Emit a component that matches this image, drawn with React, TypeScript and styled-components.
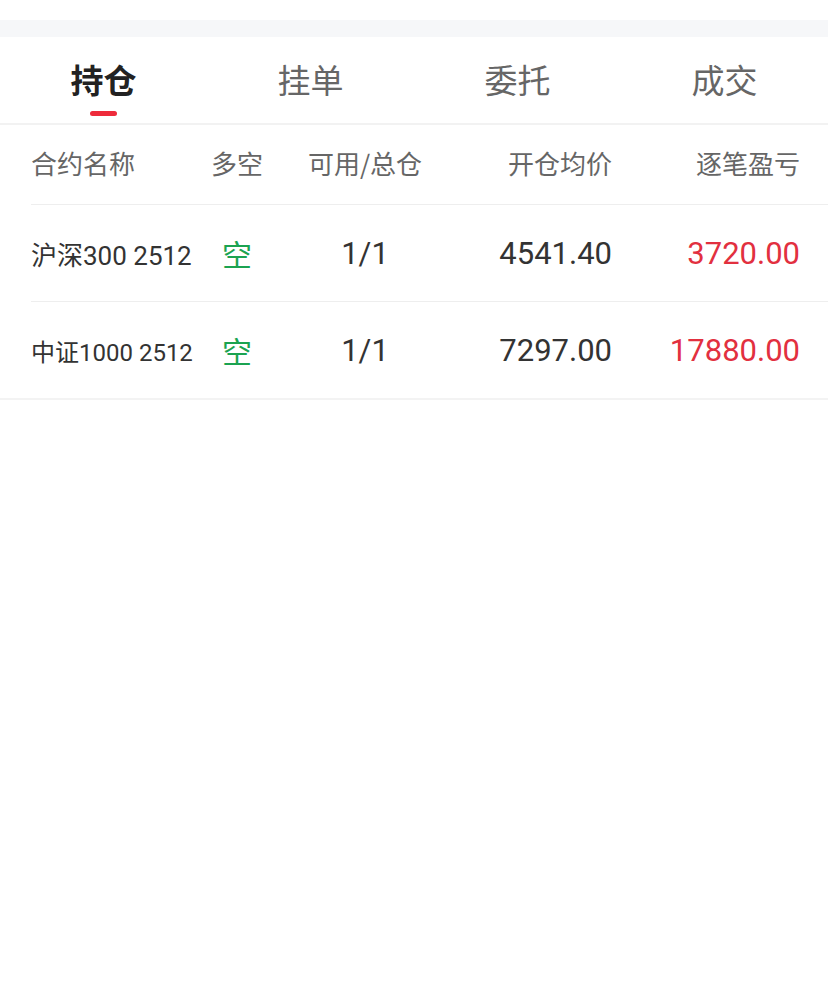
import * as React from 'react';
import styled, { createGlobalStyle } from 'styled-components';

type Position = {
  name: string;
  nameSize: number;
  side: string;
  qty: string;
  price: string;
  pnl: string;
};

const TABS = ['持仓', '挂单', '委托', '成交'];

// names are shrunk to fit the first column, as the app does
const POSITIONS: Position[] = [
  { name: '沪深300 2512', nameSize: 26, side: '空', qty: '1/1', price: '4541.40', pnl: '3720.00' },
  { name: '中证1000 2512', nameSize: 24, side: '空', qty: '1/1', price: '7297.00', pnl: '17880.00' },
];

const App: React.FC = () => {
  const [active, setActive] = React.useState(0);

  return (
    <Page>
      <GlobalStyle />
      <TopGap />
      <Band />
      <TabBar>
        {TABS.map((t, i) => (
          <Tab key={t} active={i === active} onClick={() => setActive(i)}>
            {t}
            {i === active && <Indicator />}
          </Tab>
        ))}
      </TabBar>
      <Table>
        <HeadRow>
          <HeadCell align="left">合约名称</HeadCell>
          <HeadCell align="center">多空</HeadCell>
          <HeadCell align="center">可用/总仓</HeadCell>
          <HeadCell align="right">开仓均价</HeadCell>
          <HeadCell align="right">逐笔盈亏</HeadCell>
        </HeadRow>
        {POSITIONS.map((p) => (
          <Row key={p.name}>
            <Name size={p.nameSize}>{p.name}</Name>
            <Side>{p.side}</Side>
            <Num align="center">{p.qty}</Num>
            <Num align="right">{p.price}</Num>
            <Pnl>{p.pnl}</Pnl>
          </Row>
        ))}
      </Table>
    </Page>
  );
};

export default App;

const GlobalStyle = createGlobalStyle`
  html, body {
    margin: 0;
    padding: 0;
    background: #fff;
  }
  body {
    font-family: Roboto, "Noto Sans CJK SC", "Noto Sans", sans-serif;
    -webkit-font-smoothing: antialiased;
  }
`;

const Page = styled.div`
  width: 828px;
  min-height: 997px;
  background: #fff;
`;

const TopGap = styled.div`
  height: 20px;
`;

const Band = styled.div`
  height: 17px;
  background: #f6f7f9;
`;

const TabBar = styled.div`
  display: grid;
  grid-template-columns: repeat(4, 1fr);
  height: 88px;
  border-bottom: 2px solid #f2f2f2;
  box-sizing: border-box;
`;

const Tab = styled.div<{ active: boolean }>`
  position: relative;
  display: flex;
  align-items: center;
  justify-content: center;
  padding-bottom: 3px;
  font-family: "Noto Sans CJK SC", sans-serif;
  font-size: 33px;
  font-weight: ${(p) => (p.active ? 700 : 400)};
  color: ${(p) => (p.active ? '#222' : '#666')};
  cursor: pointer;
`;

const Indicator = styled.span`
  position: absolute;
  left: 50%;
  bottom: 7px;
  width: 27px;
  height: 5px;
  margin-left: -14px;
  border-radius: 3px;
  background: #ee2b3b;
`;

const Table = styled.div`
  padding-left: 31px;
  border-bottom: 2px solid #f3f3f3;
`;

const columns = `
  display: grid;
  grid-template-columns: 171px 70px 186px 154px 188px;
  align-items: center;
  box-sizing: border-box;
`;

const HeadRow = styled.div`
  ${columns}
  height: 80px;
  border-bottom: 1px solid #eeeeee;
`;

const HeadCell = styled.div<{ align: 'left' | 'center' | 'right' }>`
  text-align: ${(p) => p.align};
  font-family: "Noto Sans CJK SC", sans-serif;
  font-size: 26px;
  color: #666;
  padding-bottom: 4px;
`;

const Row = styled.div`
  ${columns}
  height: 97px;
  border-bottom: 1px solid #eeeeee;

  &:last-child {
    border-bottom: none;
    height: 96px;
  }
`;

const Name = styled.div<{ size: number }>`
  font-size: ${(p) => p.size}px;
  color: #333;
  white-space: nowrap;
`;

const Side = styled.div`
  text-align: center;
  font-family: "Noto Sans CJK SC", sans-serif;
  font-size: 30px;
  color: #1ba351;
`;

const Num = styled.div<{ align: 'center' | 'right' }>`
  text-align: ${(p) => p.align};
  font-size: 31px;
  color: #333;
`;

const Pnl = styled.div`
  text-align: right;
  font-size: 31px;
  color: #e2303f;
`;
